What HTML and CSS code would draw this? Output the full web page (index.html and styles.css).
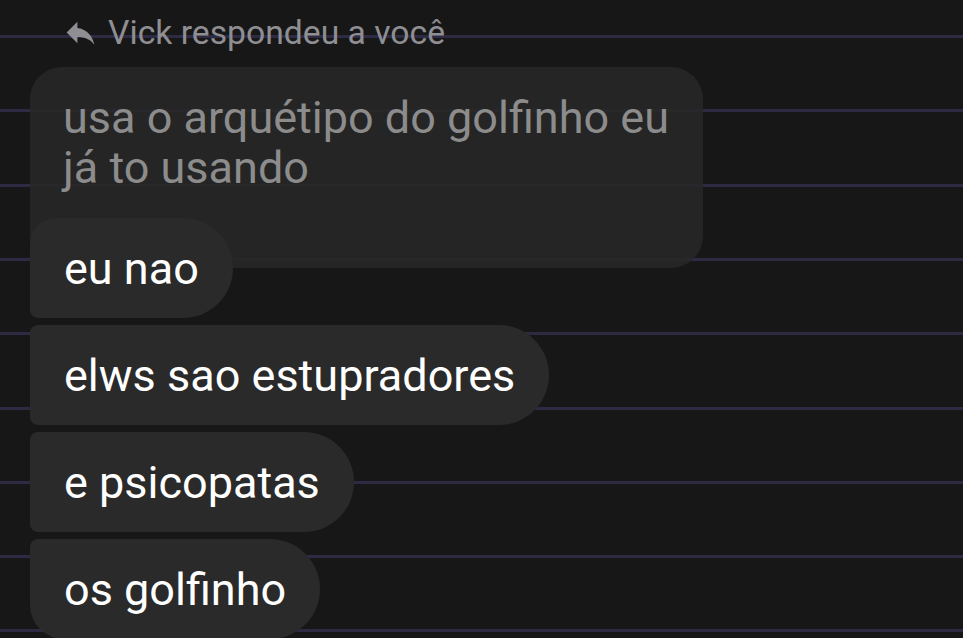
FILE: index.html
```html
<!DOCTYPE html>
<html lang="pt-BR">
<head>
<meta charset="utf-8">
<link rel="stylesheet" href="styles.css">
</head>
<body>
<div class="chat">
  <div class="reply-head">
    <svg class="reply-icon" viewBox="0 0 24 24" width="37" height="37"><path d="M10 9V5l-7 7 7 7v-4.1c5 0 8.5 1.6 11 5.1-1-5-4-10-11-11z" fill="#8e8e93"/></svg>
    <span class="reply-label">Vick respondeu a você</span>
  </div>
  <div class="quoted">usa o arquétipo do golfinho eu já to usando</div>
  <div class="msgs">
    <div class="bubble first">eu nao</div>
    <div class="bubble">elws sao estupradores</div>
    <div class="bubble">e psicopatas</div>
    <div class="bubble last">os golfinho</div>
  </div>
</div>
</body>
</html>
```
FILE: styles.css
```css
html, body {
  margin: 0;
  padding: 0;
}
body {
  width: 963px;
  height: 638px;
  overflow: hidden;
  background-color: #171717;
  background-image: repeating-linear-gradient(to bottom, transparent 0, transparent 35px, #2d2a43 35px, #2d2a43 38px, transparent 38px, transparent 74.3px);
  font-family: Roboto, "Liberation Sans", sans-serif;
}
.chat {
  padding-left: 30px;
  display: flex;
  flex-direction: column;
  align-items: flex-start;
}
.reply-head {
  display: flex;
  align-items: center;
  height: 40px;
  margin-top: 13px;
  padding-left: 32px;
  gap: 9px;
}
.reply-icon {
  display: block;
  margin-top: -2px;
}
.reply-label {
  font-size: 33.7px;
  line-height: 40px;
  color: #8e8e93;
}
.quoted {
  box-sizing: border-box;
  width: 673px;
  margin-top: 14px;
  padding: 26px 30px 75px 33px;
  border-radius: 32px;
  background: rgba(40, 40, 40, 0.86);
  color: #8c8c8c;
  font-size: 45px;
  line-height: 50px;
}
.msgs {
  display: flex;
  flex-direction: column;
  align-items: flex-start;
  gap: 7px;
  margin-top: -50px;
}
.bubble {
  box-sizing: border-box;
  height: 100px;
  display: flex;
  align-items: center;
  padding: 0 34px;
  background: #2a2a2a;
  color: #ffffff;
  font-size: 45px;
  border-radius: 8px 50px 50px 8px;
}
.bubble.first {
  border-top-left-radius: 26px;
}
.bubble.last {
  border-bottom-left-radius: 34px;
}
```
